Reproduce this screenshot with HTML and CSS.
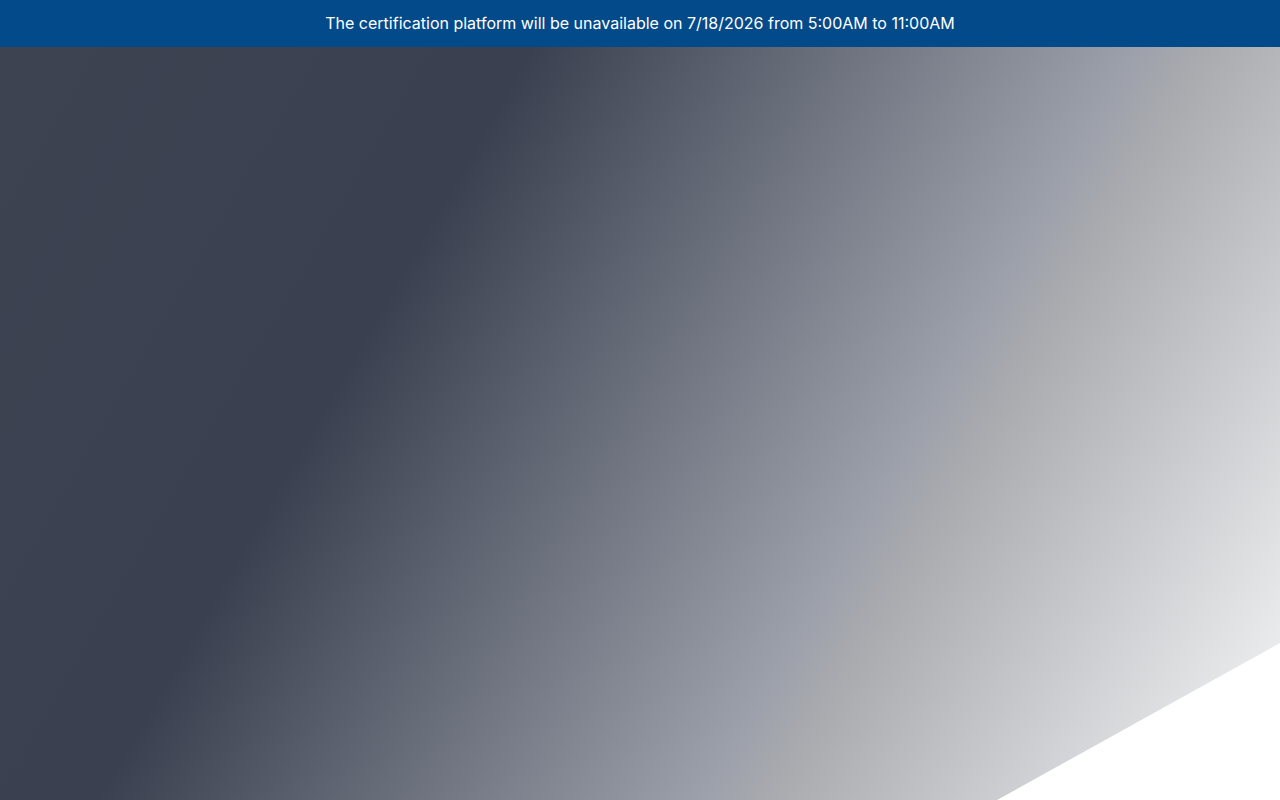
FILE: index.html
```html
<!DOCTYPE html>
<html lang="en">
<head>
<meta charset="utf-8">
<title>Certification platform</title>
<link rel="stylesheet" href="styles.css">
</head>
<body>
<div class="notice">The certification platform will be unavailable on 7/18/2026 from 5:00AM to 11:00AM</div>
<main class="hero"></main>
</body>
</html>
```

FILE: styles.css
```css
html, body {
  margin: 0;
  padding: 0;
  background: #ffffff;
  font-family: Inter, "Noto Sans", "Liberation Sans", sans-serif;
}
body {
  width: 1280px;
  height: 800px;
  overflow: hidden;
  display: flex;
  flex-direction: column;
}
.notice {
  height: 47px;
  box-sizing: border-box;
  background: #034a8a;
  color: #ffffff;
  font-size: 16px;
  line-height: 47px;
  text-align: center;
  flex: none;
}
.hero {
  flex: 1;
  background: linear-gradient(120deg,
    #3e4352 0%,
    #3a404f 31%,
    #9da1ab 66.5%,
    #aaabaf 70.5%,
    #e8e9eb 94%,
    #f6f6f7 100%);
  clip-path: polygon(0 0, 100% 0, 100% 79.15%, 77.9% 100%, 0 100%);
}
```
